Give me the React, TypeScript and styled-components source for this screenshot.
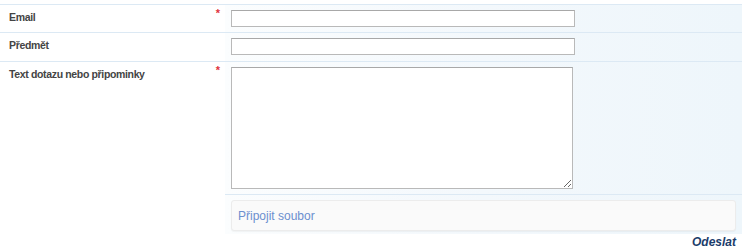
import styled, { createGlobalStyle } from 'styled-components';

const Global = createGlobalStyle`
  html, body { margin: 0; padding: 0; background: #fff; }
  body { font-family: "Liberation Sans", Arial, sans-serif; }
`;

const Form = styled.form`
  width: 742px;
  margin-top: 4px;
  border-top: 1px solid #dce9f4;
`;

const Row = styled.div<{ $line?: boolean }>`
  display: flex;
  border-top: ${(p) => (p.$line ? '1px solid #dce9f4' : 'none')};
`;

const LabelCell = styled.div`
  width: 225px;
  box-sizing: border-box;
  display: flex;
  justify-content: space-between;
  align-items: flex-start;
  padding: 6px 5px 0 9px;
`;

const Label = styled.label`
  font-size: 10.5px;
  letter-spacing: -0.35px;
  font-weight: bold;
  color: #444;
  line-height: 13px;
`;

const Star = styled.span`
  color: #e0343c;
  font-size: 11px;
  font-weight: bold;
  line-height: 8px;
  margin-top: -2px;
`;

const FieldCell = styled.div<{ $line?: boolean; $bottom?: number }>`
  flex: 1;
  padding: 5px 6px ${(p) => p.$bottom ?? 5}px;
  background: linear-gradient(to right, #fbfdfe 0%, #f3f8fc 50%, #eef6fb 100%);
  border-top: ${(p) => (p.$line ? '1px solid #dce9f4' : 'none')};
`;

const Input = styled.input`
  display: block;
  width: 344px;
  height: 17px;
  box-sizing: border-box;
  border: 1px solid #b9b9b9;
  border-top-color: #a8a8a8;
  background: #fff;
  margin: 0;
  padding: 0 3px;
`;

const Area = styled.textarea`
  display: block;
  width: 342px;
  height: 122px;
  box-sizing: border-box;
  border: 1px solid #b9b9b9;
  border-top-color: #a8a8a8;
  background: #fff;
  margin: 0;
  resize: both;
`;

const FileBox = styled.div`
  height: 31px;
  box-sizing: border-box;
  border: 1px solid #ececec;
  border-radius: 3px;
  background: #fafafa;
  box-shadow: 0 1px 1px rgba(0, 0, 0, 0.04);
  display: flex;
  align-items: center;
  padding-left: 6px;
`;

const FileLink = styled.a`
  font-size: 12px;
  color: #6b8fcf;
  text-decoration: none;
`;

const Actions = styled.div`
  display: flex;
  justify-content: flex-end;
  padding: 2px 6px 0 0;
`;

const Submit = styled.button`
  border: none;
  background: none;
  padding: 0;
  font-family: "Liberation Sans", Arial, sans-serif;
  font-size: 12px;
  line-height: 13px;
  font-weight: bold;
  font-style: italic;
  color: #1b3c6b;
  cursor: pointer;
`;

export default function App() {
  return (
    <>
      <Global />
      <Form>
        <Row>
          <LabelCell>
            <Label>Email</Label>
            <Star>*</Star>
          </LabelCell>
          <FieldCell>
            <Input type="text" />
          </FieldCell>
        </Row>
        <Row $line>
          <LabelCell>
            <Label>Předmět</Label>
          </LabelCell>
          <FieldCell $bottom={6}>
            <Input type="text" />
          </FieldCell>
        </Row>
        <Row $line>
          <LabelCell>
            <Label>Text dotazu nebo připominky</Label>
            <Star>*</Star>
          </LabelCell>
          <FieldCell>
            <Area />
          </FieldCell>
        </Row>
        <Row>
          <LabelCell />
          <FieldCell $line $bottom={3}>
            <FileBox>
              <FileLink href="#">Připojit soubor</FileLink>
            </FileBox>
          </FieldCell>
        </Row>
        <Actions>
          <Submit type="button">Odeslat</Submit>
        </Actions>
      </Form>
    </>
  );
}
